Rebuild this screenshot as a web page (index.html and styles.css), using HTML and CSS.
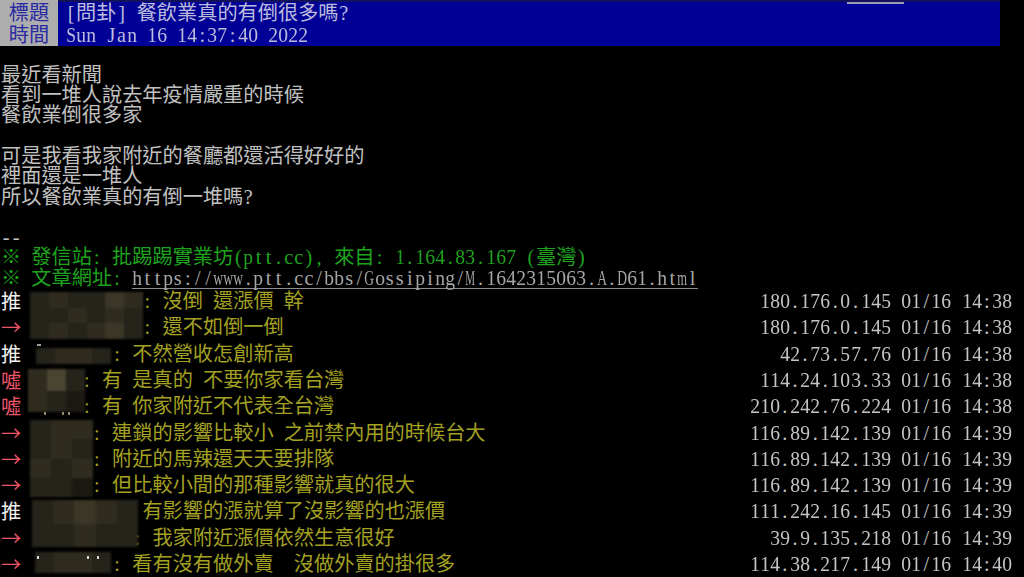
FILE: index.html
```html
<!DOCTYPE html>
<html lang="zh-Hant">
<head>
<meta charset="utf-8">
<title>[問卦] 餐飲業真的有倒很多嗎?</title>
<link rel="stylesheet" href="styles.css">
</head>
<body>
<div class="term">
  <header class="head">
    <div class="labels">
      <div class="lab">標題</div>
      <div class="lab">時間</div>
    </div>
    <div class="vals">
      <div class="clip"><span class="boardtag"></span></div>
      <div class="val t">[問卦] 餐飲業真的有倒很多嗎?</div>
      <div class="val t">Sun Jan 16 14:37:40 2022</div>
    </div>
  </header>
  <main class="article">
    <div class="ln t">最近看新聞</div>
    <div class="ln t">看到一堆人說去年疫情嚴重的時候</div>
    <div class="ln t">餐飲業倒很多家</div>
    <div class="ln"></div>
    <div class="ln t">可是我看我家附近的餐廳都還活得好好的</div>
    <div class="ln t">裡面還是一堆人</div>
    <div class="ln t">所以餐飲業真的有倒一堆嗎?</div>
    <div class="ln"></div>
    <div class="ln t">--</div>
    <div class="ln green t">※ 發信站: 批踢踢實業坊(ptt.cc), 來自: 1.164.83.167 (臺灣)</div>
    <div class="ln green t">※ 文章網址: <span class="url">https://www.ptt.cc/bbs/Gossiping/M.1642315063.A.D61.html</span></div>
  </main>
  <section class="comments">
    <div class="row"><span class="tag push">推</span><span class="uid w12"></span><span class="msg t">: 沒倒 還漲價 幹</span><span class="ip t">180.176.0.145 01/16 14:38</span></div>
    <div class="row"><span class="tag red">→</span><span class="uid w12"></span><span class="msg t">: 還不如倒一倒</span><span class="ip t">180.176.0.145 01/16 14:38</span></div>
    <div class="row"><span class="tag push">推</span><span class="uid w9"></span><span class="msg t">: 不然營收怎創新高</span><span class="ip t">42.73.57.76 01/16 14:38</span></div>
    <div class="row"><span class="tag red">噓</span><span class="uid w6"></span><span class="msg t">: 有 是真的 不要你家看台灣</span><span class="ip t">114.24.103.33 01/16 14:38</span></div>
    <div class="row"><span class="tag red">噓</span><span class="uid w6"></span><span class="msg t">: 有 你家附近不代表全台灣</span><span class="ip t">210.242.76.224 01/16 14:38</span></div>
    <div class="row"><span class="tag red">→</span><span class="uid w7"></span><span class="msg t">: 連鎖的影響比較小 之前禁內用的時候台大</span><span class="ip t">116.89.142.139 01/16 14:39</span></div>
    <div class="row"><span class="tag red">→</span><span class="uid w7"></span><span class="msg t">: 附近的馬辣還天天要排隊</span><span class="ip t">116.89.142.139 01/16 14:39</span></div>
    <div class="row"><span class="tag red">→</span><span class="uid w7"></span><span class="msg t">: 但比較小間的那種影響就真的很大</span><span class="ip t">116.89.142.139 01/16 14:39</span></div>
    <div class="row"><span class="tag push">推</span><span class="uid w10"></span><span class="msg t">: 有影響的漲就算了沒影響的也漲價</span><span class="ip t">111.242.16.145 01/16 14:39</span></div>
    <div class="row"><span class="tag red">→</span><span class="uid w11"></span><span class="msg t">: 我家附近漲價依然生意很好</span><span class="ip t">39.9.135.218 01/16 14:39</span></div>
    <div class="row"><span class="tag red">→</span><span class="uid w9"></span><span class="msg t">: 看有沒有做外賣  沒做外賣的掛很多</span><span class="ip t">114.38.217.149 01/16 14:40</span></div>

    <div class="mosaic mA">
      <i class="m2"></i><i class="m3"></i><i class="m2"></i><i class="m2"></i><i class="m4"></i><i class="m3"></i>
      <i class="m2"></i><i class="m2"></i><i class="m3"></i><i class="m2"></i><i class="m3"></i><i class="m2"></i>
      <i class="m2"></i><i class="m3"></i><i class="m2"></i><i class="m3"></i><i class="m4"></i><i class="m2"></i>
    </div>
    <div class="mosaic mB">
      <i class="m2"></i><i class="m3"></i><i class="m3"></i><i class="m2"></i>
    </div>
    <div class="mosaic mC">
      <i class="m3"></i><i class="m5"></i><i class="m2"></i>
      <i class="m3"></i><i class="m2"></i><i class="m1"></i>
    </div>
    <div class="mosaic mD">
      <i class="m2"></i><i class="m3"></i><i class="m3"></i>
      <i class="m2"></i><i class="m3"></i><i class="m2"></i>
      <i class="m3"></i><i class="m2"></i><i class="m3"></i>
      <i class="m2"></i><i class="m2"></i><i class="m1"></i>
    </div>
    <div class="mosaic mE">
      <i class="m2"></i><i class="m3"></i><i class="m4"></i><i class="m3"></i><i class="m2"></i>
      <i class="m2"></i><i class="m2"></i><i class="m3"></i><i class="m2"></i><i class="m2"></i>
    </div>
    <div class="mosaic mF">
      <i class="m2"></i><i class="m3"></i><i class="m3"></i><i class="m2"></i>
    </div>
    <span class="speck s1"></span>
    <span class="speck s2"></span>
    <span class="speck s3"></span>
    <span class="speck s4"></span>
    <span class="speck s5"></span>
    <span class="speck s6"></span>
    <span class="speck s7"></span>
  </section>
</div>
<script src="script.js"></script>
</body>
</html>
```

FILE: styles.css
```css
html, body {
  margin: 0;
  padding: 0;
  background: #000;
}

body {
  width: 1024px;
  height: 577px;
  overflow: hidden;
  font-family: "Liberation Serif", "Noto Sans CJK TC", serif;
  font-size: 20.2px;
  color: #c0c0c0;
}

.term {
  display: flex;
  flex-direction: column;
}

/* one half-width terminal cell */
.h {
  display: inline-flex;
  justify-content: center;
  width: 10.1px;
  white-space: pre;
}

/* ---------- header ---------- */
.head {
  display: flex;
  width: 1000px;
  height: 46px;
}

.labels {
  width: 58px;
  background: #adadad;
  color: #2a2aa2;
  padding-top: 3px;
  display: flex;
  flex-direction: column;
  align-items: center;
}

.lab {
  height: 21.5px;
  line-height: 21.5px;
}

.vals {
  flex: 1;
  background: #000096;
  color: #bcbcdc;
  display: flex;
  flex-direction: column;
}

.clip {
  height: 3px;
  background: linear-gradient(#12125c 0 2px, transparent 2px);
  display: flex;
}

.boardtag {
  margin-left: 789px;
  margin-top: 2px;
  width: 57px;
  height: 2px;
  background: #9c9cb4;
}

.val {
  height: 21.5px;
  line-height: 21.5px;
  padding-left: 8px;
  white-space: nowrap;
}

/* ---------- article ---------- */
.article {
  margin-top: 18.8px;
  padding-left: 1px;
}

.ln {
  height: 20.3px;
  line-height: 20.3px;
  white-space: nowrap;
}

.green {
  color: #1fa31f;
}

.url {
  color: #a6a6a6;
  background: linear-gradient(#8e8e8e, #8e8e8e) left bottom / 100% 1px no-repeat;
}

/* ---------- comments ---------- */
.comments {
  position: relative;
}

.row {
  display: flex;
  height: 26.3px;
  line-height: 26.3px;
  padding: 0 12px 0 1px;
  white-space: nowrap;
}

.tag {
  flex: none;
  width: 20.2px;
  font-family: "Noto Sans CJK TC", sans-serif;
}

.push {
  color: #f2f2f2;
}

.red {
  color: #ec5468;
}

.uid {
  flex: none;
}

.w6 { width: 60.6px; }
.w7 { width: 70.7px; }
.w9 { width: 90.9px; }
.w10 { width: 101px; }
.w11 { width: 111.1px; }
.w12 { width: 121.2px; }

.msg {
  flex: none;
  color: #a3a022;
}

.ip {
  margin-left: auto;
  color: #c4c4c4;
}

/* pixelated user ids */
.mosaic {
  position: absolute;
  display: grid;
  filter: blur(1px);
}

.mosaic i {
  display: block;
}

.m1 { background: #1b1911; }
.m2 { background: #25231a; }
.m3 { background: #2f2c1f; }
.m4 { background: #3a3727; }
.m5 { background: #4a4530; }

.mA {
  left: 30px;
  top: 4px;
  width: 113px;
  height: 47px;
  grid-template-columns: repeat(6, 1fr);
  grid-template-rows: repeat(3, 1fr);
}

.mB {
  left: 36px;
  top: 60px;
  width: 75px;
  height: 16px;
  grid-template-columns: repeat(4, 1fr);
}

.mC {
  left: 28px;
  top: 81px;
  width: 57px;
  height: 43px;
  grid-template-columns: repeat(3, 1fr);
  grid-template-rows: repeat(2, 1fr);
}

.mD {
  left: 30px;
  top: 132px;
  width: 63px;
  height: 77px;
  grid-template-columns: repeat(3, 1fr);
  grid-template-rows: repeat(4, 1fr);
}

.mE {
  left: 32px;
  top: 212px;
  width: 106px;
  height: 47px;
  grid-template-columns: repeat(5, 1fr);
  grid-template-rows: repeat(2, 1fr);
}

.mF {
  left: 35px;
  top: 264px;
  width: 76px;
  height: 21px;
  grid-template-columns: repeat(4, 1fr);
}

.speck {
  position: absolute;
  width: 2px;
  height: 3px;
  background: #8c8c6a;
}

.s1 { left: 37px; top: 56px; width: 4px; height: 2px; background: #a0a0a0; }
.s2 { left: 44px; top: 124px; }
.s3 { left: 62px; top: 124px; }
.s4 { left: 68px; top: 124px; }
.s5 { left: 37px; top: 268px; background: #d8d8d8; }
.s6 { left: 87px; top: 268px; background: #d8d8d8; }
.s7 { left: 97px; top: 268px; background: #d8d8d8; }
```

FILE: script.js
```js
(function () {
  var CELL_MAX = 9.8;
  var ctx = document.createElement('canvas').getContext('2d');

  function wrapNode(node) {
    var kids = Array.prototype.slice.call(node.childNodes);
    kids.forEach(function (k) {
      if (k.nodeType === 3) {
        var s = k.textContent;
        var frag = document.createDocumentFragment();
        var buf = '';
        for (var i = 0; i < s.length; i++) {
          var ch = s[i];
          if (ch.charCodeAt(0) < 128) {
            if (buf) { frag.appendChild(document.createTextNode(buf)); buf = ''; }
            var sp = document.createElement('span');
            sp.className = 'h';
            sp.textContent = ch;
            frag.appendChild(sp);
          } else {
            buf += ch;
          }
        }
        if (buf) frag.appendChild(document.createTextNode(buf));
        node.replaceChild(frag, k);
      } else if (k.nodeType === 1) {
        wrapNode(k);
      }
    });
  }

  document.querySelectorAll('.t').forEach(function (el) { wrapNode(el); });

  document.querySelectorAll('.h').forEach(function (sp) {
    var size = getComputedStyle(sp).fontSize;
    ctx.font = size + ' "Liberation Serif"';
    var w = ctx.measureText(sp.textContent).width;
    if (w > CELL_MAX) {
      sp.style.transform = 'scaleX(' + (CELL_MAX / w).toFixed(3) + ')';
    }
  });
})();
```
